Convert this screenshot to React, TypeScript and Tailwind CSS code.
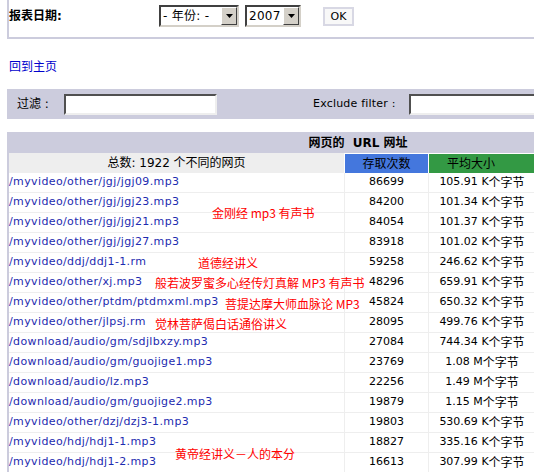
import React from 'react';

const rows: [string, string, string, string][] = [
  ['/myvideo/other/jgj/jgj09.mp3', '86699', '105.91', 'K'],
  ['/myvideo/other/jgj/jgj23.mp3', '84200', '101.34', 'K'],
  ['/myvideo/other/jgj/jgj21.mp3', '84054', '101.37', 'K'],
  ['/myvideo/other/jgj/jgj27.mp3', '83918', '101.02', 'K'],
  ['/myvideo/ddj/ddj1-1.rm', '59258', '246.62', 'K'],
  ['/myvideo/other/xj.mp3', '48296', '659.91', 'K'],
  ['/myvideo/other/ptdm/ptdmxml.mp3', '45824', '650.32', 'K'],
  ['/myvideo/other/jlpsj.rm', '28095', '499.76', 'K'],
  ['/download/audio/gm/sdjlbxzy.mp3', '27084', '744.34', 'K'],
  ['/download/audio/gm/guojige1.mp3', '23769', '1.08', 'M'],
  ['/download/audio/lz.mp3', '22256', '1.49', 'M'],
  ['/download/audio/gm/guojige2.mp3', '19879', '1.15', 'M'],
  ['/myvideo/other/dzj/dzj3-1.mp3', '19803', '530.69', 'K'],
  ['/myvideo/hdj/hdj1-1.mp3', '18827', '335.16', 'K'],
  ['/myvideo/hdj/hdj1-2.mp3', '16613', '307.99', 'K'],
];

// red notes written over the screenshot
const notes = [
  { text: '金刚经 mp3 有声书', x: 212, y: 205 },
  { text: '道德经讲义', x: 198, y: 255 },
  { text: '般若波罗蜜多心经传灯真解 MP3 有声书', x: 155, y: 275 },
  { text: '菩提达摩大师血脉论 MP3', x: 225, y: 296 },
  { text: '觉林菩萨偈白话通俗讲义', x: 155, y: 316 },
  { text: '黄帝经讲义－人的本分', x: 175, y: 446 },
];

const Arrow = () => (
  <div className="w-[16px] h-[18px] bg-[#d4d0c8] border border-t-white border-l-white border-b-[#404040] border-r-[#404040] flex items-center justify-center">
    <svg width="7" height="4" viewBox="0 0 7 4">
      <path d="M0 0h7L3.5 4z" fill="#000" />
    </svg>
  </div>
);

const Select = ({ label, width }: { label: string; width: string }) => (
  <div className={`${width} h-[22px] bg-white border-2 border-t-[#404040] border-l-[#404040] border-b-[#d4d0c8] border-r-[#d4d0c8] flex items-center justify-between pl-[2px]`}>
    <span className="text-[12px] leading-none tracking-[0.3px]">{label}</span>
    <Arrow />
  </div>
);

export default function App() {
  return (
    <div
      className="relative w-[534px] h-[472px] overflow-hidden bg-white text-black text-[11px]"
      style={{ fontFamily: '"DejaVu Sans", "Noto Sans CJK SC", sans-serif' }}
    >
      {/* report date box */}
      <div className="ml-[7px] h-[39px] border-l-2 border-b-2 border-[#ccccdd]">
        <div className="h-[32px] flex items-center">
          <span className="w-[150px] shrink-0 text-[12px] font-bold">报表日期:</span>
          <Select label="- 年份: -" width="w-[80px]" />
          <div className="ml-[6px]">
            <Select label="2007" width="w-[56px]" />
          </div>
          <button className="ml-[22px] w-[31px] h-[19px] bg-[#f8f8f8] border-2 border-[#d8d8e4] text-[11px] leading-none flex items-center justify-center">
            OK
          </button>
        </div>
      </div>

      <div className="mt-[20px] ml-[9px] h-[16px] leading-[16px] text-[12px] text-[#0000cc]">
        <a>回到主页</a>
      </div>

      {/* filters */}
      <div className="mt-[14px] ml-[7px] h-[30px] bg-[#ccccdd] flex items-center pl-[10px] overflow-hidden">
        <span className="w-[47px] shrink-0 text-[12px]">过滤 :</span>
        <div className="w-[153px] shrink-0 h-[21px] bg-white border-2 border-t-[#505050] border-l-[#505050] border-b-[#eeeeee] border-r-[#eeeeee]" />
        <span className="ml-[96px] w-[96px] shrink-0 whitespace-nowrap tracking-[0.2px]">Exclude filter :</span>
        <div className="w-[150px] shrink-0 h-[21px] bg-white border-2 border-t-[#505050] border-l-[#505050] border-b-[#eeeeee] border-r-[#eeeeee]" />
      </div>

      {/* table */}
      <div className="mt-[13px] ml-[7px] w-[700px] border-l-2 border-[#ccccdd]">
        <div className="h-[21px] bg-[#ccccdd] flex items-center justify-center text-[12px] font-bold whitespace-pre">
          网页的  URL 网址
        </div>
        <div className="h-[20px] grid grid-cols-[336px_84px_106px_1fr] text-[12px]">
          <div className="bg-[#eeeeee] border-r border-white flex items-center justify-center">
            总数: 1922 个不同的网页
          </div>
          <div className="bg-[#4477dd] border-r border-white border-t flex items-center justify-center">存取次数</div>
          <div className="bg-[#339944] border-t border-white flex items-center pl-[18px]">平均大小</div>
          <div className="bg-[#339944] border-t border-white" />
        </div>
        {rows.map(([url, hits, size, unit]) => (
          <div key={url} className="h-[20px] grid grid-cols-[336px_84px_106px_1fr] border-b border-[#eeeeee]">
            <div className="border-r border-[#eeeeee] flex items-center text-[#1d2bb0] whitespace-nowrap tracking-[0.38px]">{url}</div>
            <div className="border-r border-[#eeeeee] flex items-center justify-center">{hits}</div>
            <div className="flex items-center justify-center whitespace-nowrap">
              {size} {unit}
              <span className="text-[12px]">个字节</span>
            </div>
            <div />
          </div>
        ))}
      </div>

      {notes.map(n => (
        <div
          key={n.text}
          className="absolute text-[12px] leading-[16px] text-[#ff0000] whitespace-pre"
          style={{ left: n.x, top: n.y, fontFamily: '"Noto Sans CJK SC", sans-serif' }}
        >
          {n.text}
        </div>
      ))}
    </div>
  );
}
